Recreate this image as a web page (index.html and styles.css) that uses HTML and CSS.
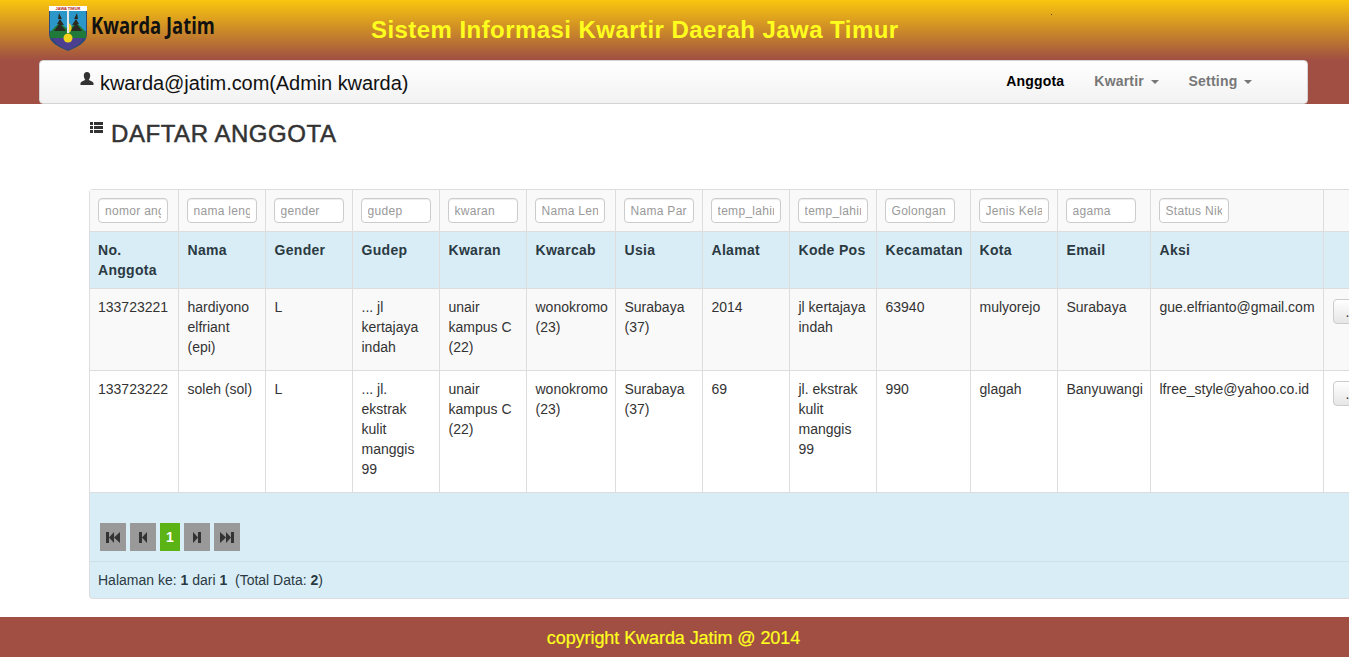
FILE: index.html
```html
<!DOCTYPE html>
<html lang="id">
<head>
    <meta charset="UTF-8">
    <meta name="viewport" content="width=device-width, initial-scale=1.0">
    <title>Sistem Informasi Kwartir Daerah Jawa Timur</title>
    <link rel="stylesheet" href="styles.css">
</head>
<body>
    <header class="top">
        <div class="banner">
            <div class="logo">
                <svg width="40" height="47" viewBox="0 0 40 47">
                    <path d="M1 1h38v28c0 9-10 13-19 17C11 42 1 38 1 29z" fill="#2f4a78"/>
                    <path d="M2 6h36v20H2z" fill="#2b97c9"/>
                    <path d="M2 27l9-9 9 6 9-6 9 9v6H2z" fill="#1f7a3a"/>
                    <path d="M11 8l3 6-2 0 4 6-3 0 5 6H6l5-7H9l3-5h-2zM29 8l-3 6 2 0-4 6 3 0-5 6h12l-5-7h2l-3-5h2z" fill="#2a2a22"/>
                    <path d="M19 6h2v22h-2z" fill="#e6e6e6"/>
                    <path d="M21 18c4 3 3 8 0 10z" fill="#f0d020"/>
                    <path d="M5 33h30c-2 6-9 9-15 12C14 42 7 39 5 33z" fill="#4d3f8f"/>
                    <circle cx="20" cy="33" r="4.500" fill="#f3d41c"/>
                    <rect x="1" y="1" width="38" height="5" fill="#fff"/>
                    <text class="logo-label" x="20" y="5.200" text-anchor="middle">JAWA TIMUR</text>
                </svg>
                <span class="logo-text">Kwarda Jatim</span>
            </div>
            <div class="site-title">Sistem Informasi Kwartir Daerah Jawa Timur</div>
            <span class="speck"></span>
        </div>
        <nav class="navbar">
            <div class="brand">
                <svg class="icon-user" width="14" height="14" viewBox="0 0 14 14"><path d="M7 0c2 0 3.200 1.500 3.200 3.500S9.200 7.200 8.700 8c1.500.8 4.300 1.400 4.800 3v2H.5v-2c.5-1.600 3.300-2.200 4.800-3-.5-.8-1.500-2.500-1.500-4.500S5 0 7 0z" fill="#333"/></svg>
                <span>kwarda@jatim.com(Admin kwarda)</span>
            </div>
            <ul class="menu">
                <li class="active">Anggota</li>
                <li>Kwartir <i class="caret"></i></li>
                <li>Setting <i class="caret"></i></li>
            </ul>
        </nav>
    </header>

    <main class="content">
        <h2 class="page-title">
            <svg width="13" height="11" viewBox="0 0 13 11"><path d="M0 0h3v3H0zM4 0h9v3H4zM0 4h3v3H0zM4 4h9v3H4zM0 8h3v3H0zM4 8h9v3H4z" fill="#333"/></svg>
            <span>DAFTAR ANGGOTA</span>
        </h2>

        <div class="table-wrap">
            <table class="grid">
                <colgroup>
                    <col class="c88"><col class="c87"><col class="c87"><col class="c87"><col class="c87"><col class="c89"><col class="c87"><col class="c87"><col class="c87"><col class="c94"><col class="c87"><col class="c93"><col class="c173"><col class="c80">
                </colgroup>
                <thead>
                    <tr class="filters">
                        <td><input placeholder="nomor anggota"></td>
                        <td><input placeholder="nama lengkap"></td>
                        <td><input placeholder="gender"></td>
                        <td><input placeholder="gudep"></td>
                        <td><input placeholder="kwaran"></td>
                        <td><input placeholder="Nama Lengkap"></td>
                        <td><input placeholder="Nama Parent"></td>
                        <td><input placeholder="temp_lahir"></td>
                        <td><input placeholder="temp_lahir"></td>
                        <td><input placeholder="Golongan"></td>
                        <td><input placeholder="Jenis Kelamin"></td>
                        <td><input placeholder="agama"></td>
                        <td><input placeholder="Status Nik"></td>
                        <td></td>
                    </tr>
                    <tr class="heads">
                        <th>No. Anggota</th><th>Nama</th><th>Gender</th><th>Gudep</th><th>Kwaran</th><th>Kwarcab</th><th>Usia</th><th>Alamat</th><th>Kode Pos</th><th>Kecamatan</th><th>Kota</th><th>Email</th><th>Aksi</th><th></th>
                    </tr>
                </thead>
                <tbody>
                    <tr class="row-a">
                        <td>133723221</td><td>hardiyono elfriant (epi)</td><td>L</td><td>... jl kertajaya indah</td><td>unair kampus C (22)</td><td>wonokromo (23)</td><td>Surabaya (37)</td><td>2014</td><td>jl kertajaya indah</td><td>63940</td><td>mulyorejo</td><td>Surabaya</td><td>gue.elfrianto@gmail.com</td><td><button class="btn-act">...</button></td>
                    </tr>
                    <tr class="row-b">
                        <td>133723222</td><td>soleh (sol)</td><td>L</td><td>... jl. ekstrak kulit manggis 99</td><td>unair kampus C (22)</td><td>wonokromo (23)</td><td>Surabaya (37)</td><td>69</td><td>jl. ekstrak kulit manggis 99</td><td>990</td><td>glagah</td><td>Banyuwangi</td><td>lfree_style@yahoo.co.id</td><td><button class="btn-act">...</button></td>
                    </tr>
                </tbody>
            </table>
            <div class="pager">
                <button class="pg wide"><svg width="14" height="13" viewBox="0 0 14 13"><path d="M0 1h3v11H0zM8 1v11L3 6.500zM14 1v11L8 6.500z" fill="#333"/></svg></button>
                <button class="pg wide"><svg width="8" height="13" viewBox="0 0 8 13"><path d="M0 1h3v11H0zM8 1v11L3 6.500z" fill="#333"/></svg></button>
                <button class="pg current">1</button>
                <button class="pg wide"><svg width="8" height="13" viewBox="0 0 8 13"><path d="M8 1H5v11h3zM0 1v11L5 6.500z" fill="#333"/></svg></button>
                <button class="pg wide"><svg width="14" height="13" viewBox="0 0 14 13"><path d="M14 1h-3v11h3zM6 1v11l5-5.500zM0 1v11l6-5.500z" fill="#333"/></svg></button>
            </div>
            <div class="page-info">Halaman ke: <b>1</b> dari <b>1</b> &nbsp;(Total Data: <b>2</b>)</div>
        </div>
    </main>

    <footer class="foot">copyright Kwarda Jatim @ 2014</footer>
</body>
</html>
```

FILE: styles.css
```css
html, body {
    margin: 0;
    height: 100%;
    overflow: hidden;
}
body {
    font-family: "Liberation Sans", Arial, sans-serif;
    font-size: 14px;
    line-height: 20px;
    color: #333;
    background: #fff;
    width: 1349px;
    display: flex;
    flex-direction: column;
}
.top {
    background-color: #a04f42;
    height: 104px;
    flex: none;
}
.banner {
    position: relative;
    height: 60px;
    background: linear-gradient(to bottom, #f9c60e, #a04f42);
    display: flex;
    align-items: flex-start;
}
.logo {
    display: flex;
    align-items: flex-start;
    margin-left: 48px;
    padding-top: 5px;
    width: 323px;
}
.logo-label {
    font-family: "Liberation Sans", Arial, sans-serif;
    font-size: 4px;
    font-weight: bold;
    fill: #b02020;
}
.logo-text {
    font-family: "Open Sans", sans-serif;
    font-size: 23px;
    font-weight: 700;
    line-height: 30px;
    color: #111;
    margin-left: 3px;
    margin-top: 5px;
    white-space: nowrap;
    transform: scaleX(0.8);
    transform-origin: left;
}
.site-title {
    font-size: 24px;
    font-weight: bold;
    color: #ffff1e;
    line-height: 30px;
    margin-top: 15px;
    letter-spacing: 0.44px;
    white-space: nowrap;
}
.speck {
    position: absolute;
    left: 1051px;
    top: 14px;
    width: 1px;
    height: 1px;
    background: #5a4010;
}
.navbar {
    margin: 0 41px 0 39px;
    height: 44px;
    box-sizing: border-box;
    background: linear-gradient(to bottom, #fff, #f2f2f2);
    border: 1px solid #d4d4d4;
    border-radius: 4px;
    display: flex;
    justify-content: space-between;
    align-items: center;
}
.brand {
    display: flex;
    align-items: center;
    margin-left: 40px;
    padding-top: 2px;
    font-size: 20px;
    letter-spacing: -0.07px;
    color: #111;
}
.icon-user {
    margin: -8px 6px 0 0;
}
.menu {
    display: flex;
    list-style: none;
    margin: -2px 40px 0 0;
    padding: 0;
    font-weight: bold;
    color: #777;
    letter-spacing: 0.2px;
}
.menu li {
    padding: 0 15px;
}
.menu li.active {
    color: #000;
}
.caret {
    display: inline-block;
    width: 0;
    height: 0;
    vertical-align: middle;
    margin-left: 2.5px;
    border-top: 4px solid #777;
    border-left: 4px solid transparent;
    border-right: 4px solid transparent;
}
.content {
    flex: 1;
    padding-left: 89px;
}
.page-title {
    margin: 0;
    padding-top: 15px;
    height: 70px;
    display: flex;
    align-items: flex-start;
    font-size: 24px;
    font-weight: normal;
    line-height: 30px;
    letter-spacing: 0.55px;
    color: #333;
    -webkit-text-stroke: 0.5px #333;
}
.page-title svg {
    margin: 3px 8px 0 1px;
}
.table-wrap {
    width: 1340px;
    box-sizing: border-box;
    border: 1px solid #ddd;
    border-right: 0;
    border-radius: 4px 0 0 4px;
    background: #d9edf7;
}
.grid {
    table-layout: fixed;
    width: 1313px;
    border-collapse: collapse;
}
.c88 { width: 88px; }
.c89 { width: 89px; }
.c87 { width: 87px; }
.c94 { width: 94px; }
.c93 { width: 93px; }
.c173 { width: 173px; }
.c80 { width: 80px; }
.grid td, .grid th {
    padding: 8px;
    vertical-align: top;
    text-align: left;
    border-left: 1px solid #ddd;
    border-top: 1px solid #ddd;
}
.grid .heads th:not(:first-child), .grid tbody td:not(:first-child) {
    padding-left: 9px;
}
.grid tr > :first-child {
    border-left: 0;
}
.filters td {
    background: #f9f9f9;
    border-top: 0;
    height: 25px;
}
.filters input {
    display: block;
    box-sizing: border-box;
    width: 70px;
    height: 25px;
    padding: 4px 6px;
    border: 1px solid #ccc;
    border-radius: 4px;
    font: 12px "Liberation Sans", Arial, sans-serif;
    letter-spacing: 0.3px;
    background: #fff;
    box-shadow: inset 0 1px 1px rgba(0, 0, 0, 0.075);
}
.filters input::placeholder {
    color: #999;
    opacity: 1;
}
.heads th {
    background: #d9edf7;
    height: 40px;
    color: #2b3a42;
    letter-spacing: 0.3px;
}
.row-a td {
    background: #f9f9f9;
    height: 65px;
}
.row-b td {
    background: #fff;
    height: 105px;
}
.btn-act {
    width: 60px;
    height: 25px;
    padding: 0 12px;
    margin-top: 2px;
    text-align: left;
    font: 14px "Liberation Sans", Arial, sans-serif;
    border: 1px solid #ccc;
    border-radius: 4px;
    background: linear-gradient(to bottom, #fff, #e6e6e6);
    color: #333;
}
.pager {
    border-top: 1px solid #ddd;
    height: 69px;
    box-sizing: border-box;
    padding: 30px 0 0 10px;
    display: flex;
    gap: 4px;
    align-items: flex-start;
}
.pg {
    height: 28px;
    padding: 0;
    border: 0;
    display: flex;
    align-items: center;
    justify-content: center;
    background: #999;
}
.pg.wide {
    width: 26px;
}
.pg.current {
    width: 20px;
    background: #5cb315;
    color: #fff;
    font: bold 14px "Liberation Sans", Arial, sans-serif;
}
.page-info {
    border-top: 1px solid #cfe0e8;
    padding: 8px;
    height: 20px;
    color: #2b3a42;
}
.foot {
    flex: none;
    height: 40px;
    line-height: 42px;
    padding-right: 2px;
    background: #a04f42;
    color: #ffff1e;
    text-align: center;
    font-size: 18px;
    letter-spacing: -0.07px;
    -webkit-text-stroke: 0.2px #ffff1e;
}
```
